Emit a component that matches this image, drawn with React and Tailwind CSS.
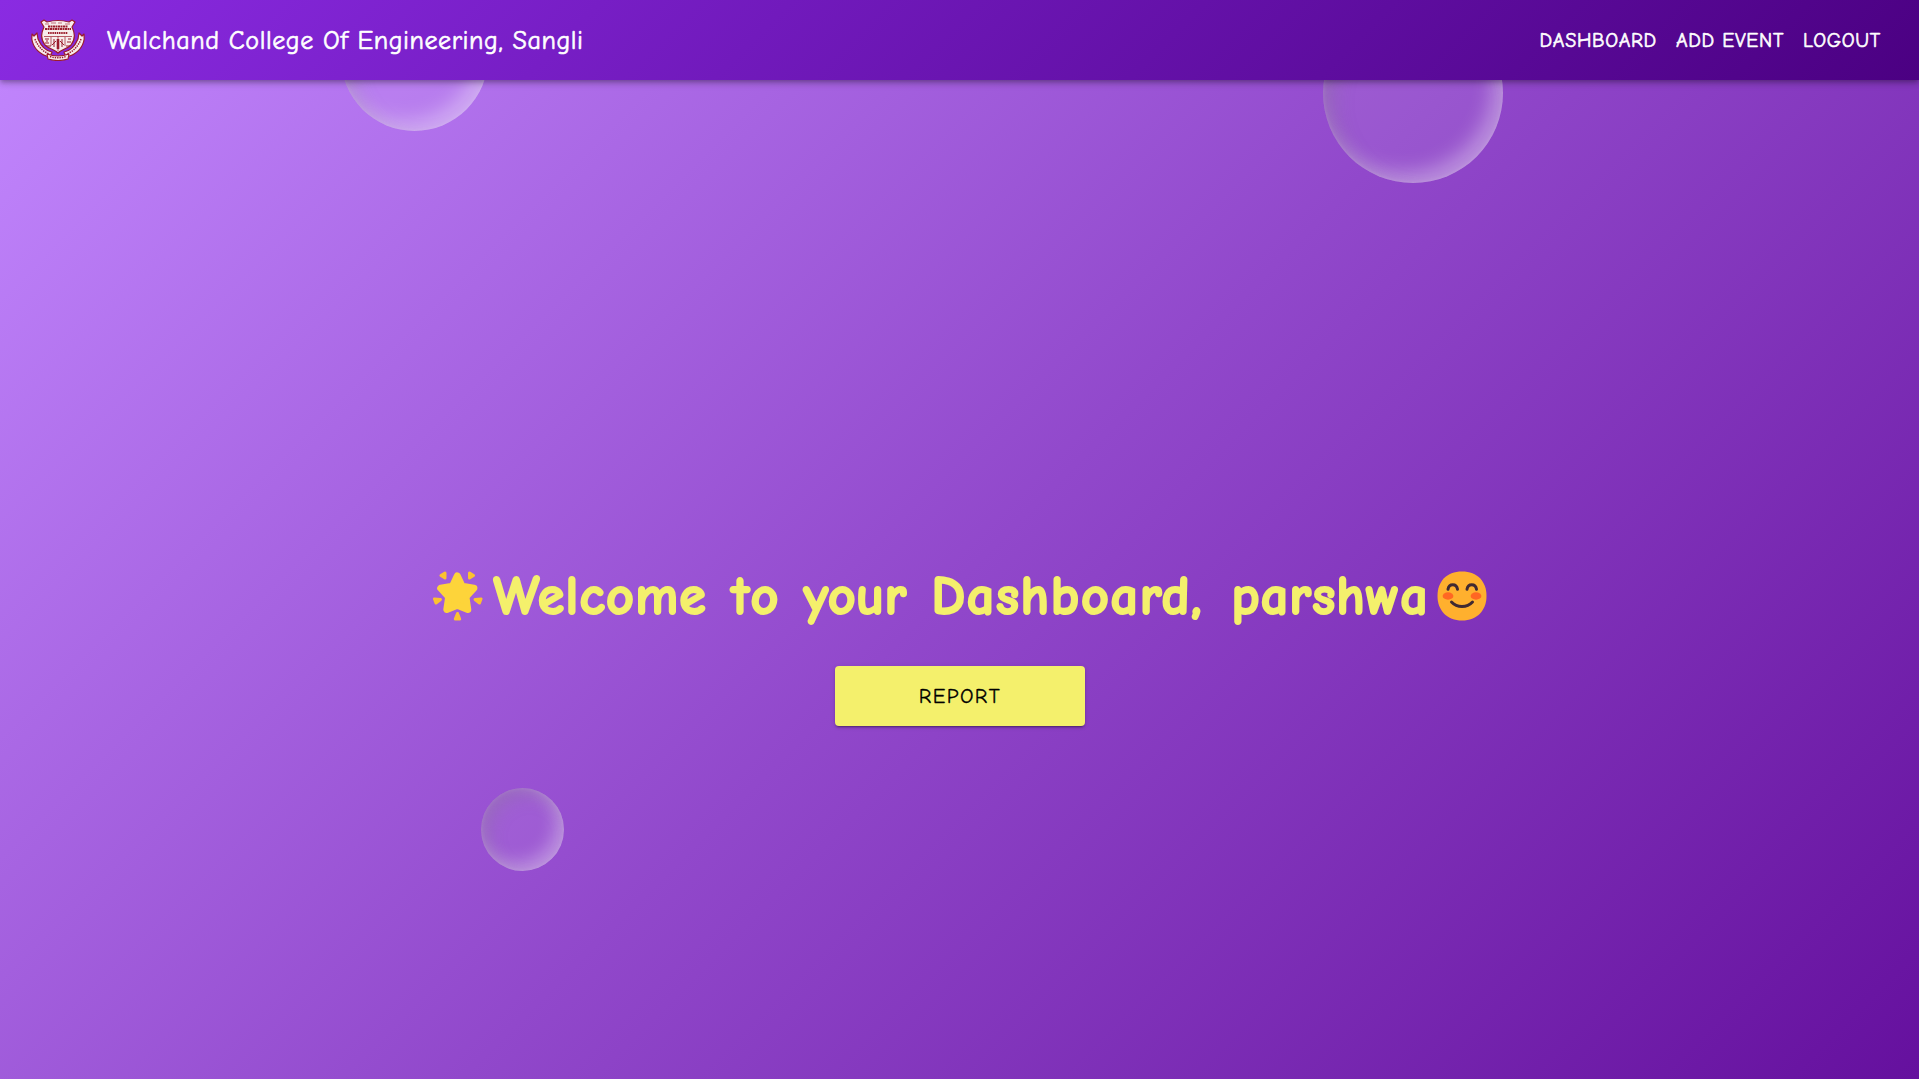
import React from "react";

function Crest() {
  return (
    <svg viewBox="0 0 54 42" className="h-[42px] w-[54px] shrink-0" aria-label="College crest">
      <g stroke="#9b1c2c" strokeWidth="1.2" fill="#f7ecec" strokeLinejoin="round">
        <path d="M1 15l2 2 3-3 1 6c3 7 8 12 14 13l-2 5C9 36 2 29 .8 20z" />
        <path d="M53 15l-2 2-3-3-1 6c-3 7-8 12-14 13l2 5c10-2 17-9 18.200-18z" />
        <path d="M16 35q11 4 22 0l-1 5q-10 3-20 0z" />
        <path d="M10 3l3-2 3 2q11-3 22 0l3-2 3 2-3 5c3 6 3 13-1 18-4 4-9 4-13 8-4-4-9-4-13-8-4-5-4-12-1-18z" />
      </g>
      <g stroke="#9b1c2c" fill="none" strokeWidth="1">
        <path d="M14 5h4m2-1h5m2 0h4m3 1h5" strokeWidth=".6" />
        <path d="M14 10h26M17 7.500h20" strokeWidth="1.800" strokeDasharray="2 .5" />
        <path d="M17 14h20" strokeWidth="2" strokeDasharray="1.500 .7" />
        <path d="M13 17.500h28M27 17v15M20 18v9M34 18v9" strokeWidth=".7" />
        <path d="M14 20h4m-3 2h2m-3 2h4M37 20h3m-4 3h4m-17-3v8m8-8v8M21 26l4-4M33 26l-4-4M15 27h5M35 27h4" />
        <path d="M27 20v10" strokeWidth="2.600" />
        <path d="M4 20q4 11 15 15.500M50 20q-4 11-15 15.500M19 37.500q8 2.500 16 0" strokeWidth="1.500" strokeDasharray="1.400 1" />
      </g>
    </svg>
  );
}

function GlowingStar() {
  return (
    <svg viewBox="0 0 50 50" className="h-[50px] w-[50px] shrink-0" fill="#fdd43a" stroke="#fdd43a" strokeLinejoin="round">
      <path strokeWidth="7" d="M24.300 5l4.800 10.300 11.800 1.900-8 8.600 1.900 12.700-10.500-4.200-10.500 4.200 1.900-12.700-8-8.600 11.800-1.900z" />
      <g strokeWidth="3" fill="#fcc22e" stroke="#fcc22e">
        <path d="M12 2v5l-4-2.500zM36.500 2v5l4-2.500z" />
        <path d="M1.500 28l6 .5-4.500 3.500zM48 28l-6 .5 4.500 3.500z" />
        <path d="M24.500 42.500l2.200 5.500h-4.400z" />
      </g>
    </svg>
  );
}

function SmilingFace() {
  return (
    <svg viewBox="0 0 50 50" className="h-[50px] w-[50px] shrink-0">
      <path fill="#ffb02e" d="M25 .5C40.500.5 49.500 10.500 49.500 25S40 49.500 25 49.500.5 39.500.5 25 9.500.5 25 .5z" />
      <ellipse cx="11" cy="25" rx="5.400" ry="3.700" fill="#ff6723" />
      <ellipse cx="39" cy="25" rx="5.400" ry="3.700" fill="#ff6723" />
      <g fill="none" stroke="#402a32" strokeWidth="3" strokeLinecap="round">
        <path d="M11 18.300c1-6 8.500-6 9.500 0M30 18.300c1-6 8.500-6 9.500 0" />
        <path d="M14.500 31c5.500 6 15.500 6 21 0" />
      </g>
    </svg>
  );
}

const bubble =
  "absolute rounded-full bg-white/[0.08] shadow-[inset_10px_10px_20px_rgba(128,128,128,0.27),inset_-10px_-10px_20px_rgba(255,255,255,0.36),inset_0_0_4px_rgba(255,255,255,0.15)]";

const smallBubble =
  "absolute rounded-full bg-white/[0.08] shadow-[inset_7px_7px_18px_rgba(128,128,128,0.27),inset_-7px_-7px_18px_rgba(255,255,255,0.36),inset_0_0_4px_rgba(255,255,255,0.12)]";

export default function App() {
  return (
    <div className="relative flex h-[1079px] flex-col overflow-hidden font-['Comic_Sans_MS','Comic_Neue',cursive]">
      <header className="relative z-10 flex h-20 shrink-0 items-center bg-[linear-gradient(135deg,#8a2be2,#4b0082)] pl-[31px] pr-[38px] text-white shadow-[0_2px_4px_-1px_rgba(0,0,0,0.2),0_4px_5px_rgba(0,0,0,0.14),0_1px_10px_rgba(0,0,0,0.12)]">
        <Crest />
        <h1 className="ml-[22px] mt-[3px] whitespace-nowrap text-[26px] tracking-[0.58px] [-webkit-text-stroke:0.6px_white]">
          Walchand College Of Engineering, Sangli
        </h1>
        <nav className="ml-auto mt-[2px] flex gap-[19px] whitespace-nowrap text-[20px] tracking-[0.7px] [-webkit-text-stroke:0.6px_white]">
          <a>DASHBOARD</a>
          <a>ADD EVENT</a>
          <a>LOGOUT</a>
        </nav>
      </header>
      <main className="flex flex-1 flex-col items-center bg-[linear-gradient(135deg,#c084fc_0%,#9148cb_50%,#65109e_100%)] pt-[481px]">
        <div className={`${bubble} left-[341px] top-[-16px] h-[147px] w-[147px]`} />
        <div className={`${bubble} left-[1323px] top-[3px] h-[180px] w-[180px]`} />
        <div className={`${smallBubble} left-[481px] top-[787.5px] h-[83px] w-[83px]`} />
        <h2 className="flex h-[70px] items-center whitespace-nowrap text-[54px] font-bold text-[#f4f06c] [-webkit-text-stroke:2px_#f4f06c]">
          <GlowingStar />
          <span className="ml-[11px] w-[238px] tracking-[1.2px]">Welcome</span>{" "}
          <span className="w-[72px] tracking-[2.6px]">to</span>{" "}
          <span className="w-[128px] tracking-[0.4px]">your</span>{" "}
          <span className="w-[300px] tracking-[1.7px]">Dashboard,</span>{" "}
          <span className="w-[205px] tracking-[1.1px]">parshwa</span>
          <SmilingFace />
        </h2>
        <button className="mt-[35px] h-[60px] w-[250px] rounded bg-[#f4f06c] pl-[1px] pt-[1px] text-[21px] tracking-[1.4px] text-black shadow-[0_3px_1px_-2px_rgba(0,0,0,0.2),0_2px_2px_rgba(0,0,0,0.14),0_1px_5px_rgba(0,0,0,0.12)] [-webkit-text-stroke:0.3px_black]">
          REPORT
        </button>
      </main>
    </div>
  );
}
